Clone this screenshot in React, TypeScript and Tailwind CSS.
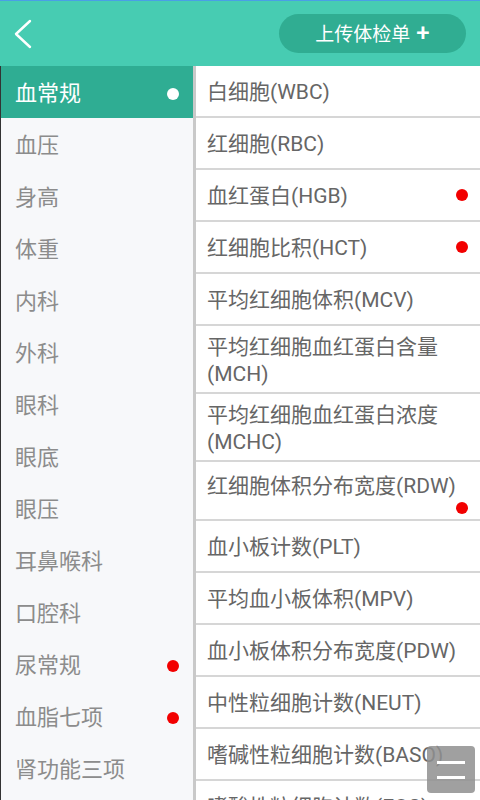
const categories = [
  { name: "血常规", dot: "active" },
  { name: "血压" },
  { name: "身高" },
  { name: "体重" },
  { name: "内科" },
  { name: "外科" },
  { name: "眼科" },
  { name: "眼底" },
  { name: "眼压" },
  { name: "耳鼻喉科" },
  { name: "口腔科" },
  { name: "尿常规", dot: "red" },
  { name: "血脂七项", dot: "red" },
  { name: "肾功能三项" },
  { name: "肝功能" },
];

type Item = { label: string; red?: boolean; wrap?: boolean; dotBelow?: boolean };

const items: Item[] = [
  { label: "白细胞(WBC)" },
  { label: "红细胞(RBC)" },
  { label: "血红蛋白(HGB)", red: true },
  { label: "红细胞比积(HCT)", red: true },
  { label: "平均红细胞体积(MCV)" },
  { label: "平均红细胞血红蛋白含量(MCH)", wrap: true },
  { label: "平均红细胞血红蛋白浓度(MCHC)", wrap: true },
  { label: "红细胞体积分布宽度(RDW)", dotBelow: true },
  { label: "血小板计数(PLT)" },
  { label: "平均血小板体积(MPV)" },
  { label: "血小板体积分布宽度(PDW)" },
  { label: "中性粒细胞计数(NEUT)" },
  { label: "嗜碱性粒细胞计数(BASO)" },
  { label: "嗜酸性粒细胞计数(EOS)" },
];

export default function App() {
  return (
    <div
      className="relative w-[480px] h-[800px] overflow-hidden bg-white"
      style={{ fontFamily: 'Roboto, "Noto Sans CJK SC", sans-serif' }}
    >
      {/* Header */}
      <div className="h-[66px] bg-[#47ccb2] border-t border-[#4a9fe6] flex items-center justify-between pl-[13px] pr-[14px]">
        <svg width="20" height="30" viewBox="0 0 20 30" fill="none">
          <polyline points="17,2 3,15 17,28" stroke="white" strokeWidth="2.4" strokeLinecap="round" strokeLinejoin="round" />
        </svg>
        <button className="w-[187px] h-[39px] rounded-full bg-[#30ad92] text-white text-[19px] leading-none flex items-center justify-center gap-[6px] pt-[2px]">
          <span>上传体检单</span>
          <span className="text-[24px] font-medium -mt-[4px]">+</span>
        </button>
      </div>

      <div className="flex h-[734px]">
        {/* Sidebar */}
        <div className="w-[193px] shrink-0 bg-[#f7f8fa] border-l border-[#333]">
          {categories.map((c) => (
            <div
              key={c.name}
              className={
                c.dot === "active"
                  ? "h-[52px] flex items-center justify-between pl-[14px] pr-[14px] pt-[3px] bg-[#2fad93] text-white"
                  : "h-[52px] flex items-center justify-between pl-[14px] pr-[14px] pt-[3px] text-[#8c8c8c]"
              }
            >
              <span className="text-[22px] leading-none">{c.name}</span>
              {c.dot === "active" && <span className="w-[12px] h-[12px] rounded-full bg-white" />}
              {c.dot === "red" && <span className="w-[12px] h-[12px] rounded-full bg-[#f20000]" />}
            </div>
          ))}
        </div>

        {/* Detail list */}
        <div className="flex-1 border-l-[3px] border-[#c9c9c9] bg-white">
          {items.map((it) => (
            <div key={it.label} className="border-b-2 border-[#d6d6d6]">
              {it.wrap ? (
                <div className="h-[66px] pl-[11px] pr-[30px] pt-[8px] text-[21px] leading-[27px] text-[#666]">
                  {it.label}
                </div>
              ) : it.dotBelow ? (
                <div className="h-[57px] pl-[11px] pr-[12px] pt-[11px] text-[21px] leading-[27px] text-[#666]">
                  <div>{it.label}</div>
                  <div className="flex justify-end mt-[2px]">
                    <span className="w-[12px] h-[12px] rounded-full bg-[#f20000]" />
                  </div>
                </div>
              ) : (
                <div className="h-[50px] pl-[11px] pr-[12px] pt-[3px] flex items-center justify-between text-[21px] leading-none text-[#666]">
                  <span>{it.label}</span>
                  {it.red && <span className="w-[12px] h-[12px] rounded-full bg-[#f20000] -mt-[3px]" />}
                </div>
              )}
            </div>
          ))}
        </div>
      </div>

      {/* Floating menu button */}
      <div className="absolute left-[427px] top-[746px] w-[48px] h-[47px] rounded-[4px] bg-[#8f8f8f]/85 flex flex-col items-center justify-center gap-[12px]">
        <span className="w-[28px] h-[3px] bg-white" />
        <span className="w-[28px] h-[3px] bg-white" />
      </div>
    </div>
  );
}
